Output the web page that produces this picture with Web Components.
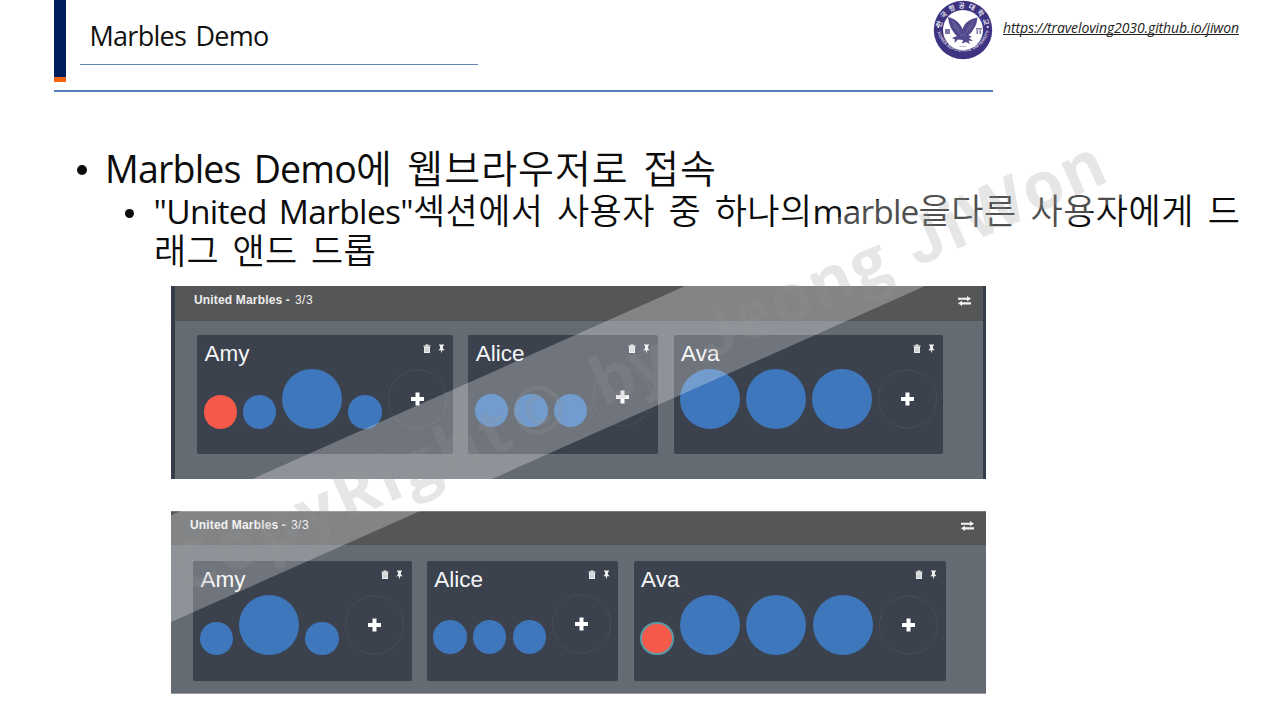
<!DOCTYPE html>
<html lang="ko">
<head>
<meta charset="utf-8">
<title>Marbles Demo</title>
<style>
body{margin:0;width:1280px;height:720px;overflow:hidden;background:#fff;font-family:"Open Sans","Noto Sans CJK KR",sans-serif}
</style>
</head>
<body>
<demo-slide></demo-slide>
<script>
const define = (name, html, setup) => {
  const t = document.createElement('template');
  t.innerHTML = html;
  customElements.define(name, class extends HTMLElement {
    connectedCallback() {
      if (this.shadowRoot) return;
      this.attachShadow({mode: 'open'}).append(t.content.cloneNode(true));
      if (setup) setup(this, this.shadowRoot);
    }
  });
};

// A run of text whose tracking is adjusted to take exactly `width` pixels.
define('fit-run', `<style>:host{display:inline-block;white-space:pre}span{display:inline-block;text-decoration:inherit}</style><span><slot></slot></span>`, (el, root) => {
  const s = root.querySelector('span');
  const w = +el.getAttribute('width');
  const n = [...el.textContent].length;
  const natural = s.getBoundingClientRect().width;
  s.style.letterSpacing = ((w - natural) / n) + 'px';
  el.style.width = w + 'px';
});

define('school-seal', `<style>:host{display:block;width:60px;height:60px}svg{display:block}text{font-family:"Noto Sans CJK KR",sans-serif;fill:#fff}</style>
<svg width="60" height="60" viewBox="0 0 60 60">
<defs><path id="a" d="M8.500 34A21.900 21.900 0 1 1 51.500 34"/><path id="b" d="M3.600 27.500A26.500 26.500 0 0 0 56.400 27.500"/></defs>
<circle cx="30" cy="30" r="29.200" fill="#3e3381"/>
<circle cx="30" cy="30" r="20" fill="#fff"/>
<text font-size="6.800" font-weight="700" letter-spacing="3.100" opacity=".88"><textPath href="#a" startOffset="6">한국항공대학교</textPath></text>
<text font-size="4.200" style="font-family:'Liberation Sans',sans-serif" font-weight="700" opacity=".75" letter-spacing=".05"><textPath href="#b" startOffset="5">KOREA AEROSPACE UNIVERSITY</textPath></text>
<circle cx="5.300" cy="27" r="1" fill="#fff"/><circle cx="54.700" cy="27" r="1" fill="#fff"/>
<g fill="#51498b">
<path d="M15 17C20 18 25 21 28 26L29.500 29 31 25.500C34 21 39 18.500 44.500 17.500C44 22 43 26 40 30C39 32 37 34 35.500 35L39 37 36 38 40 41 35.500 40.500 37 44 33 42 29 43.500 30 40 25 39.500 21.500 43 22 39.500 19 38 24 36C19.500 32 16 26 15 17Z"/>
<path d="M12 29h5v5h-5zM43 28h6v1.500h-6zM43.500 30h1.500v4h-1.500zM46.500 30h1.500v4h-1.500z" opacity=".75"/>
<path d="M26.500 46h7v1h-7z" opacity=".35"/></g>
<path d="M18.500 20.500l8 10M20 25l7 8M41 20.500l-8 10M40 25l-7 8M27 36l3-2 3 2" stroke="#8d88b6" stroke-width=".5" fill="none"/>
</svg>`);

define('slide-header', `<style>
:host{display:block;height:92px}
.row{display:flex;height:89px}
.accent{width:12px;height:81.500px;margin-left:54px;display:flex;flex-direction:column}
.accent i{flex:1;background:#001e5c}.accent b{height:5px;background:#f2630e}
.title{box-sizing:border-box;width:398px;height:65px;margin-left:14px;padding:17px 0 0 9.500px;border-bottom:1px solid #5f86ae;font-size:27px;line-height:38px;color:#111}
school-seal{margin:0 0 0 455px}
a{margin:18px 0 0 10px;width:236px;height:22px;font-size:14px;line-height:20px;font-style:italic;color:#222}
a fit-run{text-decoration:underline;text-decoration-thickness:1px;text-underline-offset:1px;text-decoration-skip-ink:none}
.rule{height:2px;width:939px;margin:1px 0 0 54px;background:#5580b8}
</style>
<div class="row"><div class="accent"><i></i><b></b></div>
<div class="title"><fit-run width="179" style="word-spacing:3px">Marbles Demo</fit-run></div>
<school-seal></school-seal><a><fit-run width="236">https://traveloving2030.github.io/jiwon</fit-run></a></div>
<div class="rule"></div>`);

define('slide-notes', `<style>
:host{display:block;height:193.500px;padding-top:46px;box-sizing:border-box;color:#0c0c0c}
.l{display:flex;white-space:pre;align-items:baseline}
.one{padding-left:77px;height:49px;line-height:56px;font-size:37.500px}
.two{padding-left:124.500px;height:40px;line-height:44px;font-size:33.500px}
.one fit-run.k{font-family:"Noto Sans CJK KR",sans-serif;font-size:39px;word-spacing:2.500px;font-weight:350}
.two fit-run.k{font-family:"Noto Sans CJK KR",sans-serif;font-size:35px;word-spacing:3.500px;font-weight:350}
.dot{display:block;border-radius:50%;background:#0c0c0c}
.one .dot{width:10px;height:10px;margin:14px 18px 0 0;align-self:center}
.two .dot{width:9px;height:9px;margin:13px 20px 0 0;align-self:center}
.two.cont{padding-left:154px}
</style>
<div class="l one"><span class="dot"></span><fit-run width="251" style="word-spacing:4px">Marbles Demo</fit-run><fit-run class="k" width="361">에 웹브라우저로 접속</fit-run></div>
<div class="l two"><span class="dot"></span><fit-run width="259.500" style="word-spacing:4px">"United Marbles"</fit-run><fit-run class="k" width="399.500">섹션에서 사용자 중 하나의</fit-run><fit-run width="106">marble</fit-run><fit-run class="k" width="322">을다른 사용자에게 드</fit-run></div>
<div class="l two cont"><fit-run class="k" width="222">래그 앤드 드롭</fit-run></div>`);

define('marble-ball', `<style>
:host{display:block;width:33.500px;height:33.500px;border-radius:50%;background:#3e77bc;flex:none}
:host([big]){width:60px;height:60px}
:host([red]){background:#f4594a}
:host([picked]){box-sizing:border-box;border:2px solid #5b9aa5}
</style>`);

define('add-marble', `<style>:host{display:block;width:59px;height:60px;flex:none}svg{display:block}</style>
<svg width="59" height="60" viewBox="0 0 59 60"><circle cx="29.500" cy="30" r="29" fill="none" stroke="#505863" stroke-width="1" stroke-dasharray="2 1.500"/><path d="M27.500 23.500h4v4.500h4.500v4h-4.500v4.500h-4v-4.500H23v-4h4.500z" fill="#fff"/></svg>`);

define('owner-card', `<style>
:host{display:block;box-sizing:border-box;height:119.500px;background:#3b424d;border-radius:2px;padding:6px 6.500px 0;flex:none}
.top{display:flex;justify-content:space-between;height:28px}
.name{font-size:22.500px;line-height:26px;color:#f4f5f6;padding-left:1px}
svg{display:block;margin:3px 0 0 0}
.balls{display:flex;gap:var(--gap,6.200px);align-items:flex-end;height:60px}
</style>
<div class="top"><span class="name"></span><svg width="24" height="10" viewBox="0 0 24 10" fill="#eceded"><path d="M.5 1.500h2V.5h3v1h2v1.300h-7zM1 3h6v6H1z"/><path d="M2.700 4v4M4 4v4M5.300 4v4" stroke="#a1a5ab" stroke-width=".5"/><path d="M16 .5h5v1.300h-1v2.700l1.800 1.700H19.200L18.500 9.500 17.800 6.200H15.200L17 4.500V1.800h-1z"/></svg></div>
<div class="balls"><slot></slot></div>`, (el, root) => {
  root.querySelector('.name').textContent = el.getAttribute('name');
  el.style.width = el.getAttribute('width') + 'px';
});

define('marble-panel', `<style>
:host{display:block;box-sizing:border-box;width:815px;margin-left:171px;background:#656b73;font-family:"Liberation Sans",Arial,sans-serif;overflow:hidden}
header{display:flex;justify-content:space-between;box-sizing:border-box;background:#555657;border-bottom:1px solid #505458;font-size:12px;line-height:13px;color:#eee}
header span{display:flex;gap:5px}
header svg{display:block;margin-top:2px}
.cards{display:flex;gap:15.300px}
</style>
<header><span><fit-run width="96"><b>United Marbles -</b></fit-run><fit-run width="18">3/3</fit-run></span>
<svg width="13" height="10" viewBox="0 0 13 10" fill="#f3f3f3"><path d="M0 1.700h9V0l4 2.700-4 2.500V3.700H0zM13 6.200H4V4.700L0 7.300l4 2.700V8.400h9z"/></svg></header>
<div class="cards"><slot></slot></div>`, (el, root) => {
  const second = el.hasAttribute('after');
  const h = root.querySelector('header'), c = root.querySelector('.cards');
  if (second) {
    el.style.cssText = 'height:183px;margin-top:32px;border-top:1px solid #77797c;border-bottom:1px solid #989ca1';
    h.style.cssText = 'height:33px;padding:7px 12px 0 19px';
    c.style.cssText = 'padding:16px 0 0 22px';
  } else {
    el.style.cssText = 'height:193.500px;border-left:4px solid #343d49;border-right:3px solid #343d49';
    h.style.cssText = 'height:35px;padding:8px 12px 0 19px';
    c.style.cssText = 'padding:14.200px 0 0 22px';
  }
});

define('copyright-mark', `<style>:host{position:absolute;inset:0;pointer-events:none}svg{display:block}</style>
<svg width="1280" height="720" viewBox="0 0 1280 720"><path d="M-60 618.300L1127 89H1367L-60 725Z" fill="#fff" fill-opacity=".275"/>
<text transform="translate(184 594) rotate(-24.050)" font-family="Open Sans" font-weight="700" font-size="66" fill="#929292" fill-opacity=".23"><tspan x="0" textLength="364">CopyRight</tspan><tspan x="371">©</tspan> <tspan x="459" textLength="78">by</tspan> <tspan x="574" font-family="Roboto">J</tspan><tspan x="613" textLength="165">eong</tspan> <tspan x="802" font-family="Roboto">J</tspan><tspan x="842" textLength="173">iWon</tspan></text></svg>`);

define('demo-slide', `<style>:host{display:block;position:relative;width:1280px;height:720px;overflow:hidden}</style>
<slide-header></slide-header>
<slide-notes></slide-notes>
<marble-panel>
<owner-card name="Amy" width="256" style="--gap:5.900px"><marble-ball red></marble-ball><marble-ball></marble-ball><marble-ball big></marble-ball><marble-ball></marble-ball><add-marble></add-marble></owner-card>
<owner-card name="Alice" width="190" style="--gap:5.900px"><marble-ball style="margin-bottom:1.500px"></marble-ball><marble-ball style="margin-bottom:1.500px"></marble-ball><marble-ball style="margin-bottom:1.500px"></marble-ball><add-marble style="margin-bottom:1.500px"></add-marble></owner-card>
<owner-card name="Ava" width="269.500" style="--gap:5.900px"><marble-ball big></marble-ball><marble-ball big></marble-ball><marble-ball big></marble-ball><add-marble></add-marble></owner-card>
</marble-panel>
<marble-panel after>
<owner-card name="Amy" width="218.500"><marble-ball></marble-ball><marble-ball big></marble-ball><marble-ball></marble-ball><add-marble></add-marble></owner-card>
<owner-card name="Alice" width="191.500"><marble-ball style="margin-bottom:1.500px"></marble-ball><marble-ball style="margin-bottom:1.500px"></marble-ball><marble-ball style="margin-bottom:1.500px"></marble-ball><add-marble style="margin-bottom:1.500px"></add-marble></owner-card>
<owner-card name="Ava" width="312" style="--gap:6.400px"><marble-ball red picked></marble-ball><marble-ball big></marble-ball><marble-ball big></marble-ball><marble-ball big></marble-ball><add-marble></add-marble></owner-card>
</marble-panel>
<copyright-mark></copyright-mark>`);
</script>
</body>
</html>
